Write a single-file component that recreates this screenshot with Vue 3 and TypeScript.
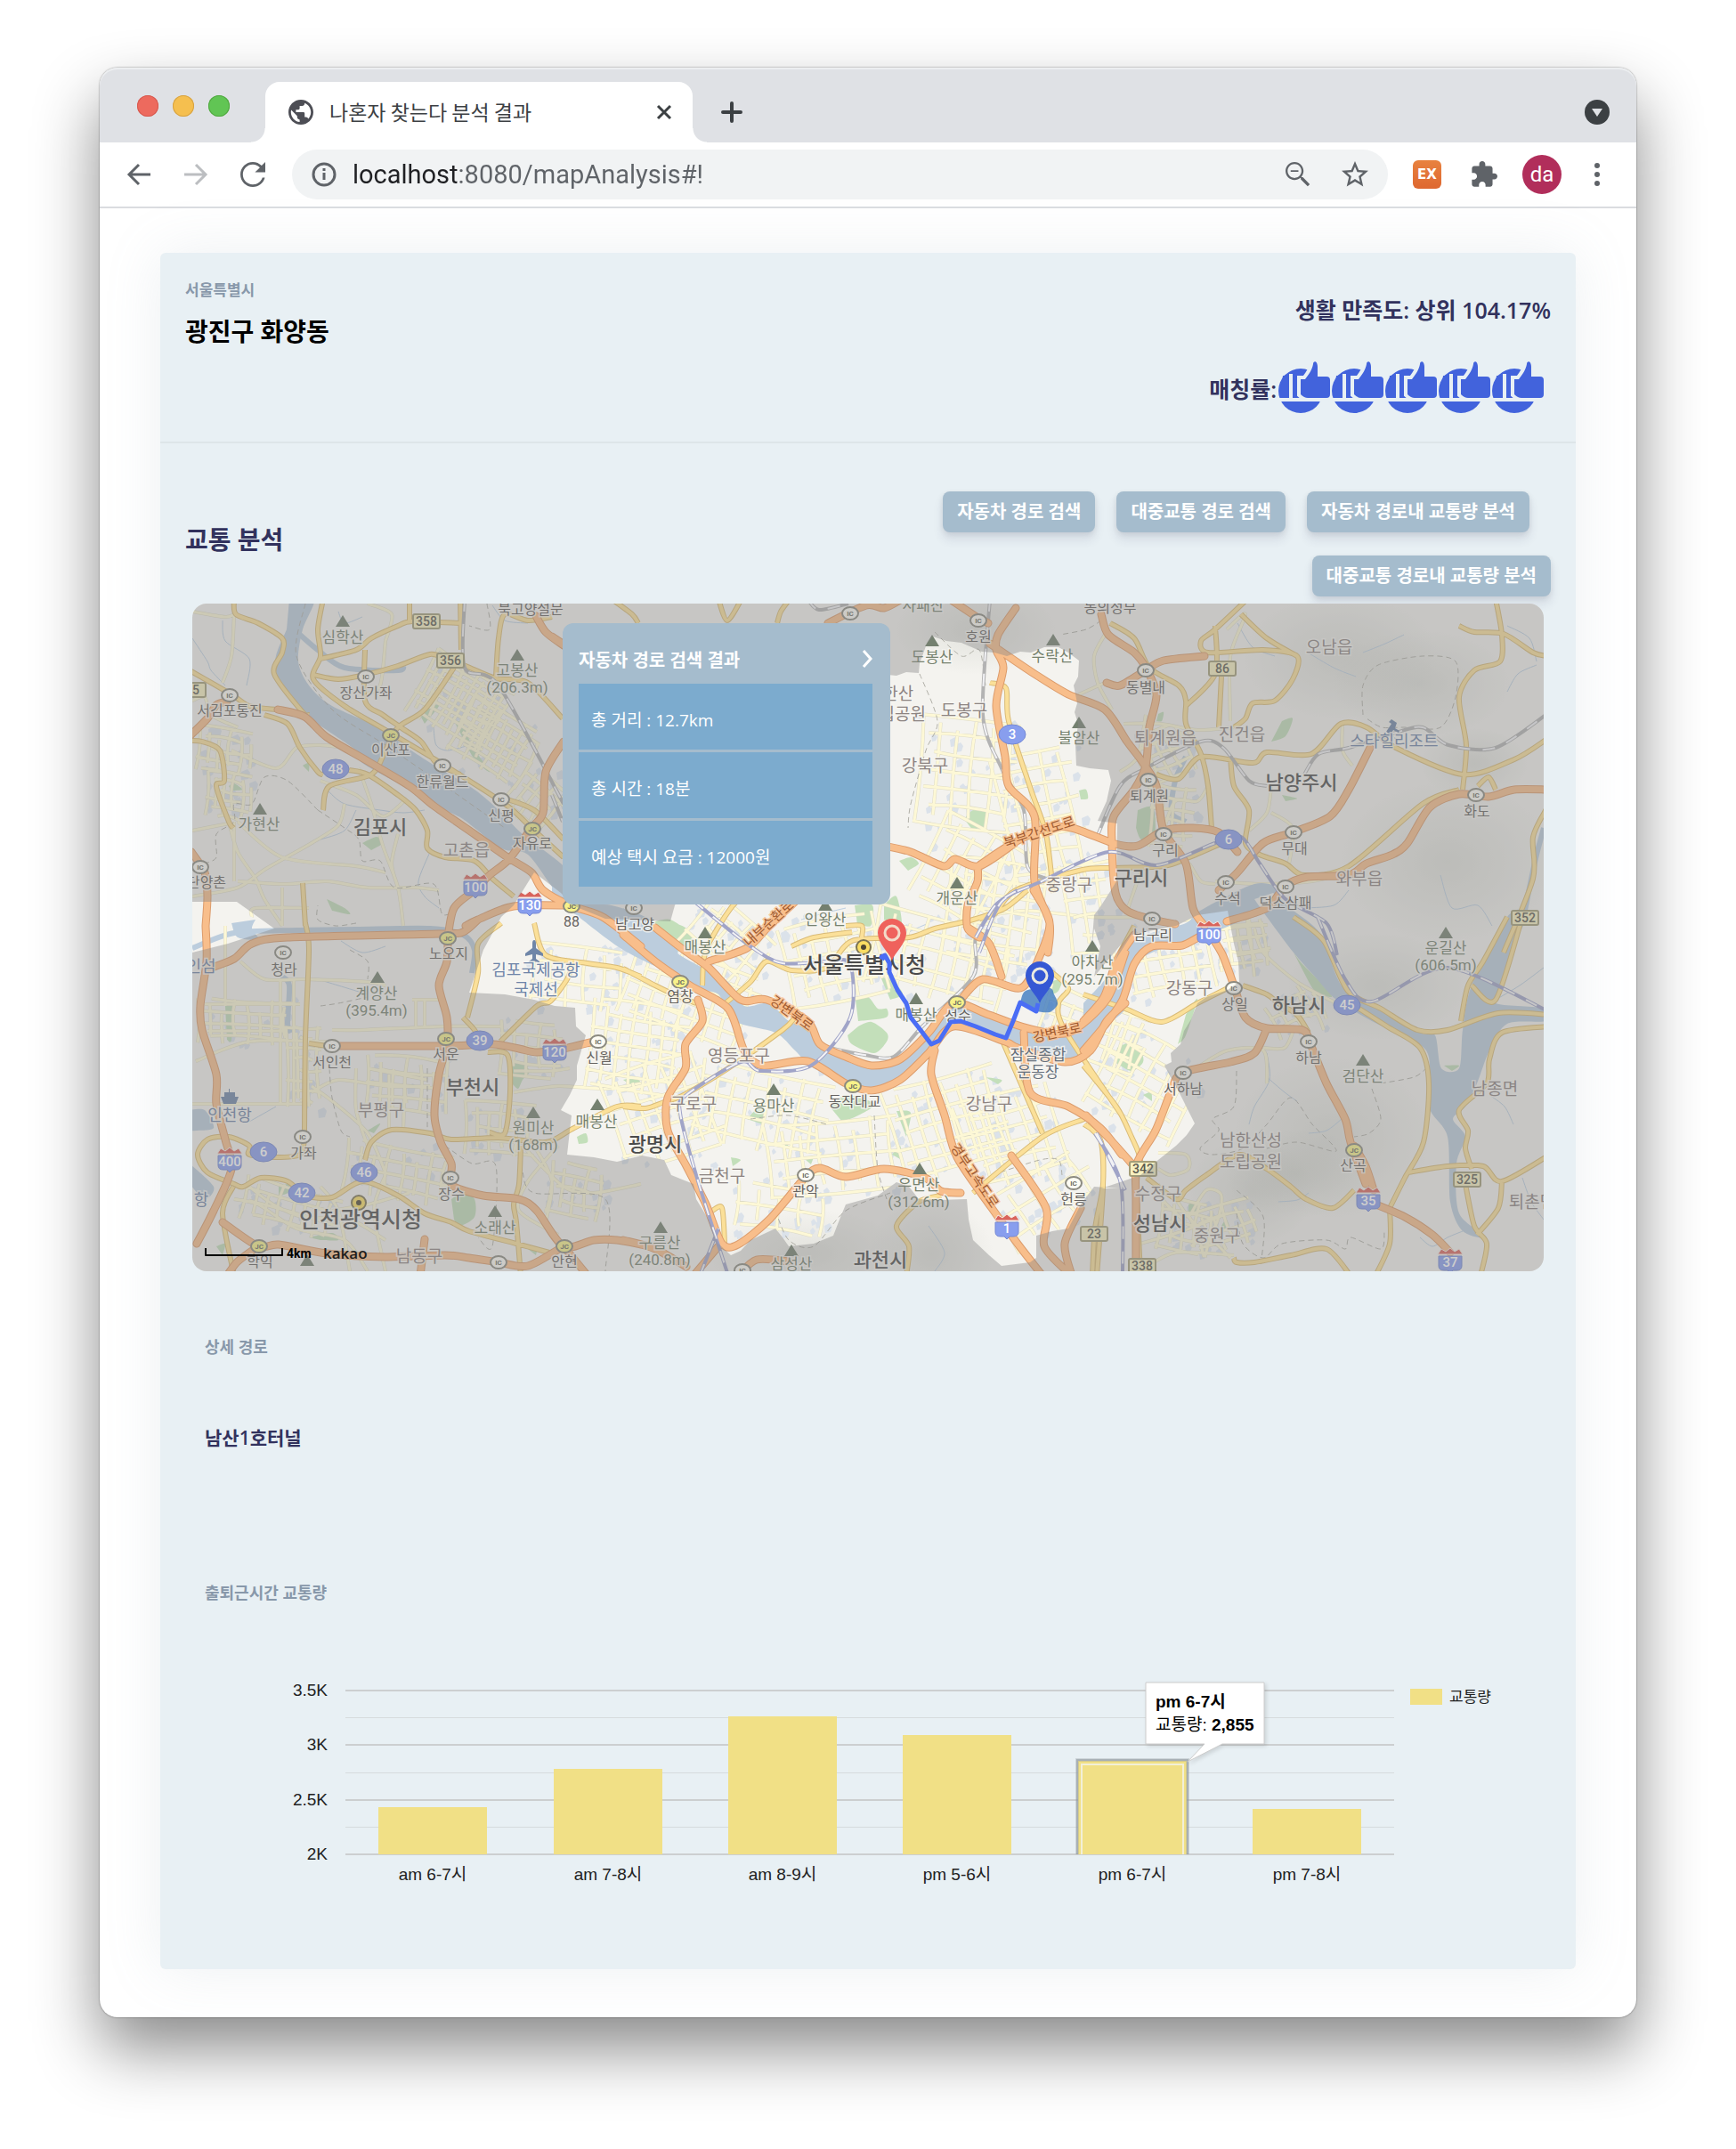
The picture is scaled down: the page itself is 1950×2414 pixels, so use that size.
<script setup lang="ts">
import { ref } from 'vue'

/* ---------- map tiles: every feature is stored in the units of its tile ---------- */
interface Tile { x: number; y: number; sx: number; sy: number }
type TileId = 'a' | 'b' | 'c' | 'd' | 'e' | 'f'
type Feature = [TileId, string]

const tiles: Record<TileId, Tile> = {
  a: { x: -16, y: -8, sx: 3, sy: 3 },
  b: { x: 404, y: -8, sx: 3, sy: 3 },
  c: { x: 884, y: -8, sx: 2.412, sy: 3 },
  d: { x: -16, y: 362, sx: 3, sy: 3 },
  e: { x: 484, y: 322, sx: 2.8, sy: 3 },
  f: { x: 1004, y: 352, sx: 2.958, sy: 3 },
}

function place(id: TileId, x: number, y: number): [number, number] {
  const t = tiles[id]
  return [Math.round(x / t.sx + t.x), Math.round(y / t.sy + t.y)]
}

function points([id, data]: Feature): [number, number][] {
  return data.split(' ').map((pair) => {
    const [x, y] = pair.split(',').map(Number)
    return place(id, x, y)
  })
}

function curve(pts: [number, number][]): string {
  let d = `M${pts[0][0]} ${pts[0][1]}`
  for (let i = 0; i < pts.length - 1; i++) {
    const p0 = pts[Math.max(i - 1, 0)]
    const p1 = pts[i]
    const p2 = pts[i + 1]
    const p3 = pts[Math.min(i + 2, pts.length - 1)]
    const c = [
      p1[0] + (p2[0] - p0[0]) / 7, p1[1] + (p2[1] - p0[1]) / 7,
      p2[0] - (p3[0] - p1[0]) / 7, p2[1] - (p3[1] - p1[1]) / 7,
    ].map((n) => n.toFixed(1))
    d += `C${c[0]} ${c[1]} ${c[2]} ${c[3]} ${p2[0]} ${p2[1]}`
  }
  return d
}

const lines = (list: Feature[]) => list.map((f) => curve(points(f))).join('')
const areas = (list: Feature[]) => list.map((f) => curve(points(f)) + 'Z').join('')

const water = areas([
  ['a', '375,10 460,10 420,110 405,220 440,300 520,370 700,450 760,500 880,580 1000,650 1080,720 1160,800 1290,900 1360,980 1290,1010 1180,870 1090,850 960,750 880,710 760,640 620,560 600,520 500,450 430,400 330,280 330,200 365,110'],
  ['b', '0,940 70,1030 200,1040 330,1090 420,1180 400,1260 240,1190 90,1080 0,1010'],
  ['e', '0,60 100,160 180,220 250,260 330,310 380,390 460,380 520,440 590,470 650,540 740,590 830,590 890,550 960,470 1010,400 1060,390 1150,420 1250,470 1400,490 1450,450 1520,370 1580,290 1580,400 1500,470 1430,560 1340,560 1240,530 1190,500 1060,450 1020,470 980,530 900,620 800,665 720,650 600,600 540,540 480,480 350,440 300,350 230,330 120,240 0,140'],
  ['f', '-10,290 80,190 110,110 200,60 330,20 380,-20 560,-110 640,-90 560,-10 400,60 220,120 150,170 110,290 60,370 -10,420'],
  ['f', '560,-60 600,0 690,120 760,200 830,280 950,350 1130,450 1140,640 1200,740 1210,960 1250,1060 1330,1080 1240,1000 1230,830 1260,740 1220,680 1260,640 1300,560 1340,450 1400,360 1530,350 1530,310 1360,290 1380,230 1450,0 1400,0 1280,230 1250,380 1240,510 1180,510 1160,400 1110,390 980,310 850,230 780,60 690,-20 620,-80'],
  ['d', '40,620 90,620 120,680 60,690 40,690'],
  ['d', '40,800 120,880 90,920 40,870'],
  ['d', '180,-10 200,40 270,45 250,10 260,-20'],
])
const streams = lines([
  ['c', '1529,780 1510,870 1490,980 1470,1100 1420,1200'],
  ['c', '560,540 530,620 520,730 560,760'],
  ['d', '48,75 190,25 400,15 600,12 850,10 960,30 1000,80 990,160'],
  ['d', '350,170 375,200 370,330 380,360'],
  ['a', '410,130 470,180 560,240 740,250 760,230'],
])
const brooks = lines([
  ['a', '48,140 100,220 110,250 160,300'], ['a', '150,80 160,150 240,210 230,300'],
  ['a', '500,650 560,700 680,720 760,730 830,720'], ['a', '600,720 560,790 480,820'],
  ['a', '860,440 870,500 910,520 980,500'], ['a', '850,860 810,960 830,1010 880,1050'],
  ['a', '1060,30 1100,80 1180,90'], ['a', '540,50 560,90 620,70'], ['c', '890,190 960,240 1020,270'],
  ['c', '1040,190 1100,160 1150,130'], ['c', '1430,320 1460,260 1510,230'], ['c', '1430,100 1490,140 1510,220'],
  ['c', '1250,940 1280,1050 1350,1040 1390,1110'], ['c', '870,1050 960,1040 1000,990'],
  ['c', '700,90 740,170 800,200'], ['f', '600,460 610,550 560,640 540,700'], ['f', '600,540 660,590 700,620'],
  ['f', '740,730 800,720 850,680'], ['f', '1340,600 1390,640 1420,700'], ['f', '1360,280 1440,230 1521,170'],
  ['d', '470,180 540,200 640,230'], ['d', '550,50 620,90 700,70'], ['d', '240,660 330,610'], ['e', '560,100 620,80 700,60'],
  ['f', '1110,1080 1150,1110 1200,1080 1250,1060'], ['f', '1450,880 1480,960 1521,1020'], ['f', '640,960 700,955 740,930'],
  ['e', '960,1130 1010,1220 980,1284'], ['e', '860,170 900,140 960,110'],
])

const parks = areas([
  ['a', '930,420 960,430 990,500 1050,590 1000,550 965,490'], ['a', '170,640 190,630 215,650 180,655'],
  ['a', '620,830 670,810 690,830 650,855'], ['a', '500,1020 560,1050 580,1070 520,1060'], ['a', '420,570 440,560 440,590'],
  ['a', '810,390 850,370 880,370 830,430'], ['c', '430,720 470,710 475,800 440,820 425,780'],
  ['c', '820,420 850,410 830,470 790,490'], ['c', '820,670 860,680 830,690'], ['c', '485,395 500,390 495,420 480,420'],
  ['c', '0,710 20,730 15,780 0,770'], ['c', '270,655 290,650 295,680 275,685'],
  ['b', '1390,750 1420,720 1465,720 1450,770 1420,790'], ['b', '1170,890 1210,880 1235,900 1200,925'],
  ['b', '1120,1040 1160,1010 1180,1120 1130,1100'], ['b', '1020,1040 1080,1040 1075,1110 1030,1100'], ['b', '330,1100 400,1090 470,1150 420,1200'],
  ['d', '160,270 185,270 180,385 165,385'], ['d', '1120,470 1150,460 1185,490 1160,520 1145,550 1125,530'],
  ['d', '920,920 960,900 1000,920 1000,980 950,1010 930,990'], ['d', '340,880 375,870 370,900 340,910'], ['d', '440,1050 520,1035 540,1060 480,1060'],
  ['d', '1345,710 1375,700 1380,730 1350,735'], ['d', '1500,520 1540,510 1560,530 1530,540'], ['d', '640,690 680,665 660,700'],
  ['d', '1180,1090 1210,1085 1205,1110'], ['d', '130,1080 160,1070 150,1110'],
  ['e', '730,370 770,360 800,400 830,400 825,430 740,440'], ['e', '740,460 780,445 830,480 830,510 790,550 720,520 705,490'],
  ['e', '390,770 440,720 440,790'], ['e', '650,730 700,690 790,720 740,760 690,780'], ['e', '860,745 905,750 890,830'],
  ['e', '845,890 870,860 875,910'], ['e', '1140,630 1190,640 1180,655'], ['e', '570,905 600,895 590,925'], ['e', '500,850 520,855 500,880'],
  ['e', '810,290 850,310 880,350 840,370'], ['e', '1340,310 1380,300 1370,340 1350,350'], ['e', '160,110 200,130 230,190 260,210 180,190'],
  ['e', '730,60 760,70 755,120 735,120'], ['e', '820,50 860,50 860,110 820,100'], ['e', '340,900 370,910 345,930'],
  ['f', '105,440 140,425 180,450 190,490 150,520 95,490'], ['f', '190,600 215,590 220,620'], ['f', '690,120 720,160 790,230 815,270 760,250 730,200'],
  ['f', '330,330 350,300 370,280 330,400 305,430'], ['f', '1190,500 1240,500 1215,520'], ['f', '340,970 365,960 365,1000 340,1000'], ['f', '440,1060 465,1020 480,1050'],
])

const motorways = lines([
  ['a', '335,382 425,405 500,475 640,555 780,640 860,705 1000,800 1110,880 1190,930 1230,990 1320,1040 1430,1080 1560,1180'],
  ['a', '40,470 100,410 130,365 165,355'], ['a', '44,860 90,930 100,1010 93,1110'],
  ['d', '93,0 97,120 75,270 80,350 130,500 130,600 160,720 180,820 120,960 62,1072'],
  ['d', '105,145 190,110 250,60 370,40 880,28 960,20 1010,-20'], ['a', '970,1110 1010,1090 1130,1045 1320,1040'],
  ['a', '910,1150 930,1050 1000,990 1050,940 1115,885 1190,780 1230,730 1240,590 1300,490'],
  ['d', '910,30 905,120 880,200 905,310 905,400 880,500 865,640 885,730 920,800 918,850 930,880 1030,910 1150,920 1210,960 1300,1080 1400,1060 1480,1060 1560,1075'],
  ['d', '545,405 900,405 1060,400 1150,415 1210,425 1300,415 1400,390'],
  ['d', '150,1000 270,1080 340,1075 500,1105 700,1115 900,1110 980,1120 1080,1135 1180,1145 1300,1080'],
  ['d', '165,1180 200,1130 270,1080'], ['d', '830,1055 815,1180'], ['d', '1300,1080 1380,1180'], ['a', '1205,65 1240,120 1300,165'],
  ['b', '0,135 36,160'], ['b', '930,90 1060,30 1120,40 1180,10'], ['b', '1340,10 1430,70 1470,90'],
  ['c', '100,40 50,130 45,180 65,240 45,370 70,540 80,640 150,740 150,960 190,1100 185,1200'],
  ['e', '1290,0 1340,110 1300,250 1250,330 1130,300 1060,370'],
  ['c', '30,160 150,260 240,330 340,380 400,490 445,560 480,640 500,790 560,900 580,1050 610,1110'],
  ['c', '330,60 350,130 420,190 450,240 480,330 460,440 450,570 420,650 365,740 360,830 370,1000 400,1060 470,1090 530,1103'],
  ['c', '345,290 380,300 450,250 500,215 610,200'], ['c', '0,905 80,840 180,780 250,780 370,835 430,840 500,790 580,780 650,795 700,860'],
  ['c', '1060,510 1000,650 950,740 850,795 770,830 700,930 650,990'],
  ['c', '1540,650 1450,650 1380,675 1300,665 1220,710 1160,830 1120,870 1050,900 1000,940 890,945 830,975 780,1050 670,1095'],
  ['b', '1120,840 1210,860 1320,910 1360,885 1440,910 1560,830'], ['b', '1435,910 1435,960 1400,1040 1400,1120 1440,1150'],
  ['e', '1090,130 1150,180 1190,290'],
  ['e', '100,125 190,200 270,260 370,370 450,370 580,440 620,520 700,560 780,590 870,570 960,480 1040,380 1150,420 1270,465 1400,480 1520,370 1580,210'],
  ['e', '0,150 100,240 210,320 330,400 380,540 440,590 580,575 700,650 780,675 870,640 960,550 1040,460 1200,510 1240,530 1390,580 1470,540 1520,440 1580,380'],
  ['f', '-10,350 60,270 100,150 160,60'],
  ['f', '-10,450 60,370 120,280 160,160 220,100 320,95 400,60 450,120 490,230 530,340 600,375 720,380 745,430 800,560 860,680 880,760 930,900'],
  ['f', '600,375 560,460 480,490 320,525 280,590 230,720 170,830 165,950 165,1210'], ['f', '0,670 80,750 150,830'],
  ['f', '890,770 930,840 955,920'], ['f', '940,960 1060,1010 1150,1070 1210,1130'],
  ['e', '235,370 250,440 195,520 195,600 140,700 140,810 200,930 260,1060 310,1190 360,1195 460,1110 570,970 620,935 700,965 820,940 950,970 1000,1015 1060,1020'],
  ['e', '980,540 970,620 1010,760 1050,900 1160,1070 1240,1190 1320,1300'], ['e', '1260,480 1280,680 1400,730 1500,800 1568,890'],
  ['e', '1220,895 1330,1070 1325,1200 1410,1300'], ['e', '1440,1070 1390,1190 1410,1300'], ['e', '0,1180 100,1210 200,1270'],
  ['e', '220,1300 300,1200'], ['e', '360,1300 420,1245 520,1250'], ['e', '270,240 390,195 460,120 540,40'],
])

const highways = lines([
  ['a', '40,250 180,330 240,370 330,380'], ['a', '40,485 80,490 140,520 155,620 130,640 170,760 185,780'],
  ['a', '190,10 195,60 270,90 350,140 350,190 325,260 420,390 440,400'],
  ['a', '490,10 470,110 480,200 455,280 560,370 700,450 900,570 1100,700 1190,780 1300,880'],
  ['a', '480,210 600,180 650,140 740,100 790,85 950,90'], ['a', '455,265 540,280 630,265 740,235 850,195 900,210 970,235 1070,275 1180,290 1296,410'],
  ['a', '630,180 630,350 690,400 750,440 820,490 870,560 950,600'], ['a', '780,10 780,80'], ['a', '950,10 955,180'], ['a', '1070,270 1080,140 1100,60 1180,80 1260,70'],
  ['a', '930,240 830,380 740,440 700,520 650,600 510,640 490,720'], ['a', '1100,680 1200,720 1300,820'],
  ['a', '575,585 640,600 740,670 800,720 840,790 840,850 900,880 1000,890 1060,950 1130,1010'],
  ['a', '290,400 370,430 410,510 470,590 490,600'], ['a', '420,965 430,1110'], ['d', '430,-10 440,80 430,380 425,700'],
  ['d', '440,395 500,405'], ['d', '975,310 1010,160 1010,60 1090,-10'], ['d', '960,310 1000,350 1020,390'], ['d', '1085,390 1210,270 1255,255 1310,180 1330,130'],
  ['d', '1200,-10 1240,100 1380,125 1480,140 1560,170'],
  ['d', '1045,425 1110,435 1120,560 1100,700 1050,695'], ['d', '630,790 650,730 720,688 850,700 920,720 1080,715 1240,730 1330,685 1480,610 1560,610'],
  ['d', '425,720 410,770 330,780 240,770 240,740 170,710 100,720 65,770 100,830 190,870 220,880 280,850 370,860 430,910 520,915 620,860 740,910 830,970 920,1000 980,1030 1140,1070 1250,1100'],
  ['d', '185,880 150,970 190,1180'], ['d', '1155,740 1150,870 1130,940 1140,1000 1155,1180'],
  ['e', '0,265 100,320 160,350 230,380'], ['e', '0,730 70,735 130,715 190,690 330,600 500,470 540,430'],
  ['e', '310,390 400,310 450,240 530,270 640,260 720,170 900,160 980,130 1100,100 1200,60 1270,0'], ['e', '700,120 750,120 750,160'], ['e', '250,320 260,200 340,60 400,0'],
  ['e', '530,190 600,160 720,140'], ['e', '1340,270 1400,330 1370,380 1390,470 1568,760'],
  ['c', '0,1085 40,1070 100,990 280,920 370,915 500,910 570,880 680,820'], ['c', '28,290 72,310 80,420 140,650 180,800 200,1000'],
  ['c', '355,90 420,140 460,240 540,300 560,350 560,430 600,530 620,640 630,780'],
  ['c', '725,10 640,110 600,150 620,190 770,180 860,200 850,280 800,350 740,360 720,410 690,440'], ['c', '640,100 640,260 560,370'], ['c', '710,60 780,140 860,200'], ['c', '655,270 650,440'],
  ['c', '480,600 540,615 600,540 740,560 780,525 900,530 980,430 1050,440 1130,510 1310,600 1450,550 1540,480'],
  ['c', '1310,650 1320,500 1300,340 1340,250 1410,220 1415,130 1400,10'], ['c', '1300,100 1340,120 1420,125 1500,190 1540,200'],
  ['c', '680,540 690,640 730,720 720,830 760,870 830,900 880,940 1000,910 1200,700 1300,650'], ['c', '1350,640 1380,610 1400,650'],
  ['c', '1540,710 1500,810 1500,950 1420,1200'], ['c', '380,1200 420,1110'],
  ['f', '520,230 600,260 640,290 700,330 740,390'], ['f', '690,0 790,80 870,250 980,310 1100,380 1200,380 1370,325 1540,330'],
  ['f', '860,280 1000,370 1110,440 1140,560 1120,760 1060,880 1010,980'], ['f', '1400,0 1320,150 1270,230 1245,350'], ['f', '1280,230 1360,280 1450,0'],
  ['f', '1540,370 1380,390 1340,480 1330,560 1240,650 1270,720 1260,780 1280,850'], ['f', '1070,860 1200,840 1320,840 1380,890 1540,800'],
  ['f', '1260,900 1290,1040 1330,1100 1310,1210'], ['f', '1380,890 1370,980 1300,1070'], ['f', '490,1150 500,1165 560,1165 680,1140 800,1120 880,1210'],
  ['f', '1010,980 1010,1100 960,1210'], ['f', '200,880 300,950 330,920 400,870 510,800 600,850 680,910 730,950 820,980 890,920'],
  ['f', '-10,500 100,640 150,740 180,820 170,900 180,1210'], ['f', '-10,260 130,310 250,355 370,290 470,240'], ['f', '0,700 50,760 55,900 30,1050 20,1210'],
  ['e', '1190,500 1320,820'], ['e', '1100,1020 1320,830 1450,770'], ['e', '1450,790 1500,840 1510,1000 1490,1300'],
  ['e', '1000,1030 930,1050 860,1130 900,1200 890,1300'], ['e', '280,1080 310,1070 320,1190'], ['b', '200,10 270,60 290,90'], ['b', '560,10 590,80 640,10'], ['b', '760,90 770,50 800,10'],
])

const localRoads = lines([
  ['a', '48,50 160,70 190,60'], ['a', '190,60 180,200 150,290'], ['a', '640,24 720,60 700,150'], ['a', '700,150 680,300 630,330'], ['a', '48,350 90,340 110,400 200,440'],
  ['a', '180,520 330,580 400,510 480,500 560,510'], ['a', '170,760 200,860 260,950 290,1020 350,1110'], ['a', '190,760 190,960'], ['a', '200,760 350,880 600,910 700,930'],
  ['a', '48,790 170,765'], ['a', '560,700 540,770 450,830 380,870 290,920 200,980 48,1010'], ['a', '610,580 650,700 690,840 740,980 760,1110'], ['a', '200,960 360,970 500,960 640,980 800,980 880,990'],
  ['a', '250,1080 260,1050 440,1050'], ['a', '350,980 350,1110'], ['a', '740,800 720,900 740,980'], ['a', '480,620 600,670 690,740 770,680'],
  ['d', '160,0 160,270'], ['d', '210,120 290,180 420,180 640,190 700,200'], ['d', '345,180 345,600'], ['d', '390,180 390,600'], ['d', '48,600 430,600'], ['d', '90,265 410,265'],
  ['d', '100,355 370,355'], ['d', '60,455 240,390 500,390'], ['d', '450,560 540,520 700,540 850,540'], ['d', '450,540 530,600 640,700 700,830'], ['d', '600,480 600,620 640,740'],
  ['d', '520,350 620,350 900,340 1090,340'], ['d', '710,500 710,680'], ['d', '765,500 760,690'], ['d', '640,480 840,520'], ['d', '800,250 800,340'], ['d', '830,250 830,340'], ['d', '790,250 880,250'],
  ['d', '1130,560 1280,540 1440,550 1560,530'], ['d', '1130,490 1250,490 1320,480'], ['d', '1160,740 1300,880 1400,900 1560,870'], ['d', '1280,740 1180,860 1150,960 1280,1040'], ['d', '1200,740 1260,860 1240,1000'],
  ['d', '240,880 320,940 420,980 580,990 700,1060'], ['d', '190,920 270,940 400,1020 560,1060 640,1163'], ['d', '480,880 540,960 580,1163'], ['d', '700,840 660,960 700,1163'], ['d', '780,900 640,940 520,960'],
  ['c', '340,130 310,200 320,290 360,380'], ['c', '270,330 340,290'], ['c', '390,430 490,430 590,450 690,440'], ['c', '450,400 430,540 380,590'], ['c', '500,790 530,690 590,690 620,640'],
  ['c', '790,640 780,730 730,790'], ['c', '790,730 850,780 840,900'], ['c', '640,960 770,970 900,960 1000,930'], ['c', '570,900 600,960 640,970'], ['c', '440,920 400,1060'], ['c', '0,1080 130,1060 300,1080 440,1080'],
  ['c', '985,430 985,520 1010,570'], ['c', '670,110 720,60 680,200 680,420'], ['f', '560,40 590,120 700,220 830,290'], ['f', '460,30 590,20'], ['f', '480,80 600,60'], ['f', '500,130 610,110'], ['f', '540,10 560,200'],
  ['f', '590,440 660,440 690,380'], ['f', '380,500 470,450 590,450 600,560'], ['f', '700,230 770,330 790,380'], ['f', '300,950 340,1010 420,1090 480,1150'], ['f', '350,1000 400,920 450,940 430,1040 350,1110'],
  ['f', '240,900 260,960 330,1030'], ['f', '180,1100 320,1060 470,1000'], ['f', '200,1180 300,1130 490,1140'], ['f', '240,795 330,800 340,850 280,870 240,850'],
])

/* dense street grids: x, y, width, height, angle, step */
type Grid = [number, number, number, number, number, number]
const cityGrids: Grid[] = [
  [560, 440, 150, 90, 20, 17], [500, 500, 110, 100, 8, 16], [530, 570, 120, 110, -18, 18], [640, 570, 150, 90, 12, 19], [720, 620, 150, 80, -6, 20],
  [850, 585, 130, 110, -16, 17], [920, 600, 110, 100, -16, 18], [840, 400, 160, 90, 14, 19], [720, 400, 110, 90, -12, 18], [900, 350, 110, 120, 8, 18],
  [955, 240, 90, 150, -12, 19], [870, 190, 110, 120, 6, 20], [870, 300, 100, 100, 28, 20], [1090, 400, 110, 80, -10, 18], [1070, 540, 110, 100, 28, 18],
  [1010, 480, 120, 70, 20, 16], [430, 420, 100, 70, 6, 20], [600, 380, 90, 70, 40, 18], [1010, 340, 60, 100, -8, 20], [660, 680, 100, 50, 8, 24], [960, 670, 120, 70, -32, 26],
]
const outerGrids: Grid[] = [
  [300, 110, 100, 80, 30, 9], [340, 155, 90, 70, 30, 11], [385, 220, 60, 60, 40, 13], [35, 165, 60, 50, 8, 12], [40, 215, 50, 50, 6, 10], [60, 470, 110, 50, 2, 14],
  [125, 520, 40, 90, 0, 12], [240, 540, 90, 60, 4, 15], [345, 590, 80, 60, 3, 14], [380, 500, 70, 60, 4, 15], [230, 640, 120, 60, 10, 16], [110, 680, 110, 50, 15, 14],
  [1180, 380, 60, 60, -8, 13], [1100, 240, 50, 70, 5, 13], [1090, 170, 60, 60, -24, 14], [1160, 700, 70, 50, -18, 13], [1240, 460, 60, 40, -25, 14], [1115, 700, 60, 60, 10, 14], [430, 660, 60, 60, 10, 14],
]
function gridPath(list: Grid[]): string {
  let d = ''
  for (const [cx, cy, w, h, angle, step] of list) {
    const c = Math.cos((angle * Math.PI) / 180)
    const s = Math.sin((angle * Math.PI) / 180)
    const at = (x: number, y: number) => `${(cx + x * c - y * s).toFixed(1)} ${(cy + x * s + y * c).toFixed(1)}`
    let k = 0
    for (let x = -w / 2; x <= w / 2; x += step, k++) d += `M${at(x, -h / 2 + (k % 3) * 7)}Q${at(x + 5 - (k % 4) * 3, 0)} ${at(x + 2, h / 2 - (k % 2) * 9)}`
    for (let y = -h / 2; y <= h / 2; y += step, k++) d += `M${at(-w / 2 + (k % 3) * 8, y)}Q${at(0, y + 5 - (k % 4) * 3)} ${at(w / 2 - (k % 2) * 10, y + 2)}`
  }
  return d
}
const cityStreets = gridPath(cityGrids)
const outerStreets = gridPath(outerGrids)

/* built-up blocks scattered over the districts */
let seed = 17
const rnd = () => { seed = (seed * 16807) % 2147483647; return seed / 2147483647 }
const blocks = [...cityGrids, ...outerGrids, ...cityGrids].map(([cx, cy, w, h]) => {
  let d = ''
  for (let i = 0; i < 11; i++) {
    const x = (cx + (rnd() - 0.5) * w * 1.1).toFixed(0)
    const y = (cy + (rnd() - 0.5) * h * 1.1).toFixed(0)
    const a = (2 + rnd() * 5).toFixed(0)
    d += `M${x} ${y}l${a} -3l3 4l-2 ${a}l-${a} 1z`
  }
  return d
}).join('')

const railways = lines([
  ['a', '965,10 965,240 1080,300 1300,700'], ['c', '30,10 10,400 60,580 120,720 130,910 180,950'], ['c', '315,820 380,640 450,580 600,490 660,510 730,620 780,640'],
  ['c', '880,600 920,530 1000,510 1130,460 1200,440 1270,500 1400,510 1540,395'], ['e', '650,530 760,555 850,560 940,460 1100,290 1110,160 1170,50'], ['b', '0,670 36,760'], ['b', '860,10 900,45 1000,24'],
])
const metro = lines([
  ['c', '0,1200 60,1030 170,960 350,860 480,905 640,830 710,810 760,900 830,1020 940,1100 970,1210'], ['e', '1110,160 1170,50 1240,0'],
  ['e', '220,35 400,190 500,245 640,240 715,250 715,430 590,590 430,610 370,580 200,690 180,750 230,960 330,1300'], ['f', '770,0 860,210 950,285 1200,170 1540,320'], ['f', '30,730 115,900 120,1210'],
  ['e', '240,1300 300,1140'], ['e', '1490,820 1580,1010'],
])
const borders = lines([
  ['a', '470,720 370,620 290,610 250,700 190,700 190,760 130,800 130,880 90,900'], ['a', '470,720 560,780 610,820 620,890 680,890 730,980 860,970 890,1070 950,1050'], ['a', '600,1100 530,1110 470,1090 470,1040'],
  ['a', '430,24 400,200 520,380 700,500 900,640 1100,780'], ['a', '1040,24 1050,110 980,100'], ['c', '1040,400 1040,300 1080,230 1200,200 1290,220 1290,340 1250,440 1150,440 1090,440 1050,410'],
  ['c', '330,80 290,110 220,130'], ['f', '500,520 490,640 420,680 440,720 380,780 420,800 520,780 600,700 680,610 750,700 830,790 700,760 600,780'], ['f', '980,560 1090,540 1130,510'], ['f', '950,580 980,680 940,730 890,740'],
  ['f', '500,920 590,1010 580,1180'], ['f', '500,1000 520,1100 590,1150 650,1100 800,1090 860,1120 880,1080 980,1120 990,1060'], ['e', '790,760 800,940 830,1040'], ['e', '480,1080 520,1180 600,1200 700,1080 840,1020'],
  ['e', '1160,960 1310,910 1370,910 1380,960'], ['e', '400,770 520,760 640,790'], ['d', '510,480 520,580 550,690 580,710'], ['d', '900,740 990,800 1070,810 1060,1080 1010,1050'], ['d', '840,480 840,690'],
  ['d', '1160,830 1200,900 1440,920 1440,1163'], ['d', '480,270 540,260 640,240'], ['d', '580,80 640,120 640,180'], ['b', '1240,260 1300,420 1260,520 1210,700 1200,780'], ['b', '1290,120 1380,200 1440,180 1460,300'],
])

/* Seoul stays bright, everything outside is dimmed */
const seoulParts: Feature[] = [
  ['a', '1030,1190 1090,1080 1130,1040 1200,930 1290,1000'],
  ['b', '70,1040 180,1085 400,1095 415,1040 600,700 900,420 1130,265 1160,268 1195,255 1235,258 1240,225 1248,200 1262,160 1285,135 1330,150 1380,155 1450,185'],
  ['c', '40,190 75,200 110,185 140,190 175,172 215,170 240,190 270,215 268,270 256,300 265,360 258,390 268,430 260,500 262,570 300,580 350,585 358,620 345,690 322,755 375,765 372,960 352,1000 330,1040 310,1075 305,1190'],
  ['e', '1480,130 1500,190 1480,290 1568,180'],
  ['f', '95,150 150,60 300,30 370,-5 470,-20 490,90 505,150 508,220 470,245 400,270 370,290 350,345 325,385 315,430 280,460 285,490 260,500 280,540 300,570 360,695 335,735 300,770 240,820 180,870 120,890 50,915'],
  ['e', '1560,1005 1480,1000 1440,1060 1400,1140 1350,1150 1300,1165 1300,1240 1280,1255 1190,1265 1150,1230 1100,1180 1085,1110 1080,1040 990,1045 930,1040 900,1000 860,985 800,1030 700,1060 680,1110 660,1165 600,1190 520,1200 500,1170 480,1140 400,1180 370,1215 340,1230 300,1190 270,1110 230,1040 220,990 150,960 130,910 60,895'],
  ['d', '1480,795 1400,780 1310,770 1320,690 1325,640 1290,620 1320,570 1345,520 1345,470 1375,370 1340,340 1338,275 1270,270 1200,248 1100,230 980,225'],
]
const seoul = 'M' + seoulParts.flatMap(points).map((p) => p.join(' ')).join('L') + 'Z'
const shade = `M0 0H1518V750H0Z${seoul}M0 335L50 335L92 365L40 382L0 392Z`
const hwayang = areas([['e', '1248,380 1265,338 1340,330 1355,352 1365,385 1340,410 1300,408']])
const route = 'M' + points(['e', '822,232 812,225 822,218 838,245 836,275 862,335 890,380 905,430 935,470 970,520 995,508 1030,445 1060,440 1110,460 1170,485 1205,497 1225,440 1248,378 1300,408 1306,380']).map((p) => p.join(' ')).join('L')

/* ---------- map labels and signs ---------- */
type LabelKind = 'city' | 'capital' | 'district' | 'peak' | 'exit' | 'poi' | 'road'
type Label = [TileId, number, number, string, LabelKind, number?]
const labels: Label[] = [
  ['a', 555, 145, '심학산', 'peak'], ['a', 632, 330, '장산가좌', 'exit'], ['a', 175, 390, '서김포통진', 'exit'], ['a', 717, 523, '이산포', 'exit'],
  ['a', 892, 630, '한류월드', 'exit'], ['a', 1188, 47, '북고양설문', 'exit'], ['a', 1142, 255, '고봉산', 'peak'], ['a', 1142, 313, '(206.3m)', 'peak'],
  ['a', 272, 775, '가현산', 'peak'], ['a', 682, 782, '김포시', 'city'], ['a', 1090, 744, '신평', 'exit'], ['a', 1194, 837, '자유로', 'exit'],
  ['a', 972, 860, '고촌읍', 'district'], ['a', 95, 970, '단양촌', 'exit'], ['a', 1326, 1100, '88', 'exit'],
  ['b', 1250, 35, '사패산', 'peak'], ['b', 1438, 140, '호원', 'exit'], ['b', 1280, 210, '도봉산', 'peak'], ['b', 1140, 332, '북한산', 'district'], ['b', 1155, 403, '국립공원', 'district'],
  ['b', 1388, 390, '도봉구', 'district'], ['b', 1256, 577, '강북구', 'district'], ['b', 1366, 1023, '개운산', 'peak'], ['b', 922, 1095, '인왕산', 'peak'], ['b', 278, 1110, '남고양', 'exit'], ['b', 515, 1187, '매봉산', 'peak'],
  ['c', 355, 42, '동의정부', 'exit'], ['c', 198, 207, '수락산', 'peak'], ['c', 270, 483, '불암산', 'peak'], ['c', 452, 312, '동별내', 'exit'], ['c', 503, 483, '퇴계원읍', 'district'],
  ['c', 712, 470, '진건읍', 'district'], ['c', 948, 178, '오남읍', 'district'], ['c', 1125, 492, '스타힐리조트', 'poi'], ['c', 874, 632, '남양주시', 'city'], ['c', 460, 677, '퇴계원', 'exit'],
  ['c', 1348, 730, '화도', 'exit'], ['c', 503, 860, '구리', 'exit'], ['c', 440, 953, '구리시', 'city'], ['c', 853, 855, '무대', 'exit'], ['c', 243, 977, '중랑구', 'district'],
  ['c', 672, 1022, '수석', 'exit'], ['c', 829, 1038, '덕소삼패', 'exit'], ['c', 1029, 957, '와부읍', 'district'], ['c', 470, 1145, '남구리', 'exit'], ['c', 165, 800, '북부간선도로', 'road', -18],
  ['d', 77, 142, '인섬', 'poi'], ['d', 357, 152, '청라', 'exit'], ['d', 670, 233, '계양산', 'peak'], ['d', 670, 290, '(395.4m)', 'peak'], ['d', 912, 98, '노오지', 'exit'],
  ['d', 1205, 152, '김포국제공항', 'poi'], ['d', 1207, 218, '국제선', 'poi'], ['d', 520, 466, '서인천', 'exit'], ['d', 902, 437, '서운', 'exit'], ['d', 993, 550, '부천시', 'city'],
  ['d', 1420, 450, '신월', 'exit'], ['d', 685, 627, '부평구', 'district'], ['d', 175, 642, '인천항', 'poi'], ['d', 1197, 688, '원미산', 'peak'], ['d', 1197, 745, '(168m)', 'peak'],
  ['d', 1411, 665, '매봉산', 'peak'], ['d', 422, 770, '가좌', 'exit'], ['d', 77, 926, '항', 'poi'], ['d', 614, 997, '인천광역시청', 'capital'], ['d', 920, 910, '장수', 'exit'],
  ['d', 1069, 1022, '소래산', 'peak'], ['d', 812, 1120, '남동구', 'district'], ['d', 276, 1138, '학익', 'exit'], ['d', 1301, 1138, '안현', 'exit'],
  ['e', 180, 363, '염창', 'exit'], ['e', 760, 257, '서울특별시청', 'capital'], ['e', 922, 425, '매봉산', 'peak'], ['e', 1052, 430, '성수', 'exit'], ['e', 1475, 248, '아차산', 'peak'],
  ['e', 1475, 305, '(295.7m)', 'peak'], ['e', 365, 563, '영등포구', 'district'], ['e', 220, 727, '구로구', 'district'], ['e', 474, 732, '용마산', 'peak'], ['e', 727, 718, '동작대교', 'exit'],
  ['e', 1150, 725, '강남구', 'district'], ['e', 1305, 560, '잠실종합', 'stadium' as LabelKind], ['e', 1305, 618, '운동장', 'stadium' as LabelKind], ['e', 100, 862, '광명시', 'city'], ['e', 312, 968, '금천구', 'district'],
  ['e', 575, 1020, '관악', 'exit'], ['e', 930, 998, '우면산', 'peak'], ['e', 930, 1057, '(312.6m)', 'peak'], ['e', 1416, 1047, '헌릉', 'exit'], ['e', 115, 1195, '구름산', 'peak'],
  ['e', 115, 1252, '(240.8m)', 'peak'], ['e', 528, 1267, '삼성산', 'peak'], ['e', 808, 1250, '과천시', 'city'], ['e', 462, 118, '내부순환로', 'road', -42], ['e', 525, 420, '강변북로', 'road', 36],
  ['e', 1365, 485, '강변북로', 'road', -12], ['e', 1100, 965, '경부고속도로', 'road', 56],
  ['f', 342, 245, '강동구', 'district'], ['f', 495, 300, '상일', 'exit'], ['f', 706, 302, '하남시', 'city'], ['f', 1195, 112, '운길산', 'peak'], ['f', 1195, 168, '(606.5m)', 'peak'],
  ['f', 740, 480, '하남', 'exit'], ['f', 920, 542, '검단산', 'peak'], ['f', 322, 585, '서하남', 'exit'], ['f', 1357, 585, '남종면', 'district'], ['f', 548, 760, '남한산성', 'district'],
  ['f', 548, 832, '도립공원', 'district'], ['f', 888, 843, '산곡', 'exit'], ['f', 240, 940, '수정구', 'district'], ['f', 246, 1037, '성남시', 'city'], ['f', 435, 1080, '중원구', 'district'], ['f', 1482, 965, '퇴촌면', 'district'],
]

type SignKind = 'ic' | 'jc' | 'route' | 'shield' | 'local' | 'peak' | 'hall'
type Sign = [TileId, number, number, SignKind, string?]
const signs: Sign[] = [
  ['a', 555, 85, 'peak'], ['a', 1142, 199, 'peak'], ['a', 275, 718, 'peak'], ['b', 1281, 150, 'peak'], ['b', 1366, 965, 'peak'], ['b', 922, 1040, 'peak'], ['b', 515, 1134, 'peak'],
  ['c', 199, 148, 'peak'], ['c', 270, 427, 'peak'], ['c', 307, 1180, 'peak'], ['c', 1265, 1135, 'peak'], ['d', 671, 175, 'peak'], ['d', 1197, 629, 'peak'], ['d', 1413, 604, 'peak'],
  ['d', 1069, 964, 'peak'], ['d', 435, 1127, 'peak'], ['e', 922, 367, 'peak'], ['e', 474, 673, 'peak'], ['e', 931, 940, 'peak'], ['e', 117, 1136, 'peak'], ['e', 528, 1214, 'peak'], ['f', 921, 484, 'peak'],
  ['a', 174, 332, 'ic'], ['a', 632, 271, 'ic'], ['a', 892, 571, 'ic'], ['a', 1088, 685, 'ic'], ['a', 74, 913, 'ic'], ['a', 717, 469, 'jc'], ['a', 1194, 782, 'jc'], ['a', 1326, 1045, 'jc'],
  ['a', 910, 1151, 'jc'], ['b', 1004, 58, 'ic'], ['b', 1436, 80, 'ic'], ['b', 276, 1050, 'ic'], ['c', 450, 250, 'ic'], ['c', 459, 619, 'ic'], ['c', 500, 800, 'ic'], ['c', 851, 794, 'ic'],
  ['c', 669, 962, 'ic'], ['c', 830, 977, 'ic'], ['c', 468, 1085, 'ic'], ['c', 1346, 670, 'ic'], ['d', 355, 90, 'ic'], ['d', 519, 405, 'ic'], ['d', 902, 380, 'jc'], ['d', 1416, 391, 'ic'],
  ['d', 420, 710, 'ic'], ['d', 917, 849, 'ic'], ['d', 273, 1080, 'jc'], ['d', 1301, 1080, 'jc'], ['d', 1081, 1133, 'ic'], ['e', 179, 308, 'jc'], ['e', 1050, 378, 'jc'], ['e', 723, 661, 'jc'],
  ['e', 573, 961, 'ic'], ['e', 1417, 987, 'ic'], ['e', 376, 1280, 'ic'], ['f', 491, 240, 'ic'], ['f', 740, 420, 'ic'], ['f', 321, 525, 'ic'], ['f', 889, 786, 'jc'],
  ['a', 531, 581, 'route', '48'], ['c', 90, 465, 'route', '3'], ['c', 676, 820, 'route', '6'], ['d', 1016, 387, 'route', '39'], ['d', 289, 763, 'route', '6'], ['d', 627, 831, 'route', '46'],
  ['d', 418, 901, 'route', '42'], ['f', 868, 296, 'route', '45'], ['a', 1003, 974, 'shield', '100'], ['a', 1184, 1036, 'shield', '130'], ['c', 622, 1134, 'shield', '100'], ['d', 1268, 420, 'shield', '120'],
  ['d', 174, 790, 'shield', '400'], ['e', 1206, 1133, 'shield', '1'], ['f', 937, 952, 'shield', '35'], ['f', 1209, 1158, 'shield', '37'],
  ['a', 836, 84, 'local', '358'], ['a', 917, 215, 'local', '356'], ['a', 48, 315, 'local', '55'], ['c', 658, 243, 'local', '86'], ['c', 1478, 1084, 'local', '352'], ['e', 1480, 1158, 'local', '23'],
  ['f', 188, 848, 'local', '342'], ['f', 186, 1176, 'local', '338'], ['f', 1267, 886, 'local', '325'], ['d', 608, 932, 'hall'], ['e', 755, 191, 'hall'],
]
const placedLabels = labels.map(([id, x, y, text, kind, turn]) => {
  const [px, py] = place(id, x, y)
  return { px, py: py - 2, text, kind, transform: turn ? `rotate(${turn} ${px} ${py})` : undefined }
})
const placedSigns = signs.map(([id, x, y, kind, text]) => {
  const [px, py] = place(id, x, y)
  return { transform: `translate(${px} ${py})`, kind, text }
})
const hills = [[1290, 60, 110, 70], [1380, 90, 100, 60], [1410, 290, 120, 90], [1280, 600, 110, 90], [1240, 640, 80, 50], [1330, 430, 100, 60], [880, 30, 90, 50], [690, 730, 110, 50], [1440, 180, 60, 40], [830, 730, 70, 60], [1190, 660, 70, 60]]

/* ---------- page data ---------- */
const actions = ['자동차 경로 검색', '대중교통 경로 검색', '자동차 경로내 교통량 분석', '대중교통 경로내 교통량 분석']
const summary = ['총 거리 : 12.7km', '총 시간 : 18분', '예상 택시 요금 : 12000원']
const open = ref(true)
const address = ref('localhost:8080/mapAnalysis#!')

const plot = { left: 208, right: 1386, bottom: 280, unit: 61.5 }
const traffic = [
  { label: 'am 6-7시', value: 2430 }, { label: 'am 7-8시', value: 2780 }, { label: 'am 8-9시', value: 3258 },
  { label: 'pm 5-6시', value: 3088 }, { label: 'pm 6-7시', value: 2855 }, { label: 'pm 7-8시', value: 2415 },
]
const slot = (plot.right - plot.left) / traffic.length
const bars = traffic.map((t, i) => {
  const height = Math.round(((t.value - 2000) / 500) * plot.unit)
  const center = Math.round(plot.left + slot * (i + 0.5))
  return { ...t, center, x: center - 61, y: plot.bottom - height, height }
})
const ticks = ['2K', '2.5K', '3K', '3.5K'].map((label, i) => ({ label, y: Math.round(plot.bottom - 1 - i * plot.unit) }))
const minor = [0, 1, 2].map((i) => Math.round(plot.bottom - 31 - i * plot.unit))
</script>

<template>
  <div class="desktop">
    <div class="window">
      <header class="tabs">
        <div class="lights">
          <button class="light red" aria-label="닫기"></button>
          <button class="light amber" aria-label="최소화"></button>
          <button class="light green" aria-label="확대"></button>
        </div>
        <div class="tab">
          <svg class="globe" viewBox="2 2 20 20" aria-hidden="true"><path d="M12 2C6.48 2 2 6.48 2 12s4.48 10 10 10 10-4.48 10-10S17.52 2 12 2zm-1 17.93c-3.95-.49-7-3.85-7-7.93 0-.62.08-1.21.21-1.79L9 15v1c0 1.1.9 2 2 2v1.93zm6.9-2.54c-.26-.81-1-1.39-1.9-1.39h-1v-3c0-.55-.45-1-1-1H8v-2h2c.55 0 1-.45 1-1V7h2c1.1 0 2-.9 2-2v-.41c2.93 1.19 5 4.06 5 7.41 0 2.08-.8 3.97-2.1 5.39z" /></svg>
          <span class="tab-title">나혼자 찾는다 분석 결과</span>
          <button class="icon" aria-label="탭 닫기"><svg width="20" height="20" viewBox="0 0 20 20"><path d="M3 3l14 14M17 3L3 17" fill="none" stroke="#3c4043" stroke-width="3" /></svg></button>
        </div>
        <button class="icon new-tab" aria-label="새 탭"><svg width="24" height="24" viewBox="0 0 24 24"><path d="M12 2v20M2 12h20" stroke="#3c4043" stroke-width="4" stroke-linecap="round" /></svg></button>
        <button class="icon tab-menu" aria-label="탭 검색"><svg width="28" height="28" viewBox="0 0 28 28"><circle cx="14" cy="14" r="14" fill="#3c4043" /><path d="M8 10h12l-6 9z" fill="#dfe1e5" /></svg></button>
      </header>

      <div class="toolbar">
        <button class="icon" aria-label="뒤로"><svg width="28" height="28" viewBox="0 0 28 28"><path d="M27 14H3M14 3L3 14l11 11" fill="none" stroke="#5f6368" stroke-width="3" /></svg></button>
        <button class="icon" aria-label="앞으로"><svg width="28" height="28" viewBox="0 0 28 28"><path d="M1 14h24M14 3l11 11-11 11" fill="none" stroke="#bcbec1" stroke-width="3" /></svg></button>
        <button class="icon" aria-label="새로고침"><svg width="28" height="28" viewBox="4 4 16 16"><path fill="#5f6368" d="M17.65 6.35C16.2 4.9 14.21 4 12 4c-4.42 0-7.99 3.58-7.99 8s3.57 8 7.99 8c3.73 0 6.84-2.55 7.73-6h-1.6c-.82 2.6-3.2 4.4-6.13 4.4-3.6 0-6.4-2.8-6.4-6.4s2.8-6.4 6.4-6.4c1.8 0 3.3.7 4.5 1.9L13.4 10.6H20V4z" /></svg></button>
        <div class="address">
          <svg width="28" height="28" viewBox="0 0 28 28" aria-hidden="true"><circle cx="14" cy="14" r="12" fill="none" stroke="#5f6368" stroke-width="3" /><path d="M14 12v8M14 7v3" stroke="#5f6368" stroke-width="3" /></svg>
          <input v-model="address" class="url" type="text" aria-label="주소" spellcheck="false" />
          <button class="icon" aria-label="축소"><svg width="28" height="28" viewBox="3 3 18 18"><path fill="#5f6368" d="M15.5 14h-.79l-.28-.27C15.41 12.59 16 11.11 16 9.5 16 5.91 13.09 3 9.5 3S3 5.91 3 9.5 5.91 16 9.5 16c1.61 0 3.09-.59 4.23-1.57l.27.28v.79l5 4.99L20.49 19l-4.99-5zm-6 .5c-2.8 0-5-2.2-5-5s2.2-5 5-5 5 2.2 5 5-2.2 5-5 5zM6.7 9h5.6v1H6.7z" /></svg></button>
          <button class="icon" aria-label="북마크"><svg width="30" height="30" viewBox="2 2 20 20"><path fill="#5f6368" d="M22 9.24l-7.19-.62L12 2 9.19 8.63 2 9.24l5.46 4.73L5.82 21 12 17.27 18.18 21l-1.63-7.03L22 9.24zM12 15.4l-3.76 2.27 1-4.28-3.32-2.88 4.38-.38L12 6.1l1.71 4.04 4.38.38-3.32 2.88 1 4.28L12 15.4z" /></svg></button>
        </div>
        <button class="extension" aria-label="확장 프로그램 EX">EX</button>
        <button class="icon puzzle" aria-label="확장 프로그램"><svg width="30" height="30" viewBox="1 1 22 22"><path fill="#5f6368" d="M20.5 11H19V7c0-1.1-.9-2-2-2h-4V3.5C13 2.12 11.88 1 10.5 1S8 2.12 8 3.5V5H4c-1.1 0-1.99.9-1.99 2v3.8H3.5c1.49 0 2.7 1.21 2.7 2.7s-1.21 2.7-2.7 2.7H2V20c0 1.1.9 2 2 2h3.8v-1.5c0-1.49 1.21-2.7 2.7-2.7 1.49 0 2.7 1.21 2.7 2.7V22H17c1.1 0 2-.9 2-2v-4h1.5c1.38 0 2.5-1.12 2.5-2.5S21.88 11 20.5 11z" /></svg></button>
        <button class="avatar">da</button>
        <button class="icon" aria-label="메뉴"><svg width="8" height="28" viewBox="0 0 8 28"><g fill="#5f6368"><circle cx="4" cy="4" r="3" /><circle cx="4" cy="14" r="3" /><circle cx="4" cy="24" r="3" /></g></svg></button>
      </div>

      <main class="page">
        <article class="card">
          <header class="head">
            <div>
              <p class="eyebrow">서울특별시</p>
              <h1>광진구 화양동</h1>
            </div>
            <div class="scores">
              <p class="score">생활 만족도: 상위 104.17%</p>
              <div class="match">
                <span class="score">매칭률:</span>
                <svg v-for="n in 5" :key="n" class="thumb" viewBox="0 0 58 58" aria-hidden="true">
                  <circle cx="25" cy="33" r="25" />
                  <path class="gap" d="M0 43h34M14 14v29" />
                  <path d="M5 16h7v25H2z" />
                  <path d="M16 18h5v22h-5z" />
                  <path class="hand" d="M25 20h5c4-5 8-11 9-17 0-4 5-4 5 3v11h10q4 0 4 4v16q0 4-4 4H33q-4 0-8-4z" />
                </svg>
              </div>
            </div>
          </header>

          <section>
            <div class="section-head">
              <h2>교통 분석</h2>
              <div class="actions">
                <button v-for="a in actions" :key="a" class="action">{{ a }}</button>
              </div>
            </div>

            <div class="map">
              <svg class="map-art" viewBox="0 0 1518 750" role="img" aria-label="서울 지도">
                <defs>
                  <radialGradient id="hill"><stop offset="0" stop-color="#9aa094" stop-opacity=".2" /><stop offset="1" stop-color="#9aa094" stop-opacity="0" /></radialGradient>
                  <clipPath id="seoul"><path :d="seoul" /></clipPath>
                </defs>
                <rect width="1518" height="750" fill="#f4f3ef" />
                <ellipse v-for="(h, i) in hills" :key="'h' + i" :cx="h[0]" :cy="h[1]" :rx="h[2]" :ry="h[3]" fill="url(#hill)" />
                <path class="blocks" :d="blocks" />
                <path class="stream" :d="streams" />
                <path class="brook" :d="brooks" />
                <path class="park" :d="parks" />
                <path class="street-case" :d="outerStreets + localRoads" />
                <path class="street" :d="outerStreets + localRoads" />
                <g clip-path="url(#seoul)">
                  <path class="street-case" :d="cityStreets" />
                  <path class="street" :d="cityStreets" />
                </g>
                <path class="water" :d="water" />
                <path class="border" :d="borders" />
                <path class="highway-case" :d="highways" />
                <path class="highway" :d="highways" />
                <path class="rail" :d="railways" />
                <path class="rail-dash" :d="railways" />
                <path class="motorway-case" :d="motorways" />
                <path class="motorway" :d="motorways" />
                <path class="metro" :d="metro" />
                <path class="rail-dash" :d="metro" />

                <g v-for="(s, i) in placedSigns" :key="'s' + i" :transform="s.transform">
                  <path v-if="s.kind === 'peak'" class="peak-mark" d="M0-7L8 6H-8Z" />
                  <template v-else-if="s.kind === 'ic' || s.kind === 'jc'">
                    <ellipse :class="s.kind" rx="9" ry="7" />
                    <text class="sign-ic">{{ s.kind === 'ic' ? 'IC' : 'JC' }}</text>
                  </template>
                  <template v-else-if="s.kind === 'route'">
                    <ellipse class="route-sign" rx="15" ry="11" />
                    <text class="sign-text">{{ s.text }}</text>
                  </template>
                  <template v-else-if="s.kind === 'shield'">
                    <path class="shield" d="M-13-5H13V6Q13 11 7 11H3L0 14L-3 11H-7Q-13 11-13 6Z" />
                    <path class="shield-top" d="M-14-7L-10-13L-5-10L0-14L5-10L10-13L14-7Z" />
                    <text class="sign-text" y="2">{{ s.text }}</text>
                  </template>
                  <template v-else-if="s.kind === 'local'">
                    <rect class="local-sign" x="-15" y="-8" width="30" height="16" rx="2" />
                    <text class="local-text">{{ s.text }}</text>
                  </template>
                  <template v-else>
                    <circle class="hall" r="8" />
                    <circle r="3" fill="#4d4632" />
                  </template>
                </g>
                <path class="poi-mark" d="M384 378q2 0 2 4v5l8 6v3l-8-2v5l4 3v1l-6-1-6 1v-1l4-3v-5l-8 2v-3l8-6v-5q0-4 2-4z" />
                <path class="poi-mark" d="M42 545v4h6v5h4l-3 8H35l-3-8h4v-5h5v-4z" />
                <path class="poi-mark" d="M1347 130l6 4-2 6 5 3-1 2-6-3-3 5 5 4-1 1 3 0-12-8 6-9-3-2z" />
                <text v-for="(l, i) in placedLabels" :key="'l' + i" :x="l.px" :y="l.py" :class="['label', l.kind]" :transform="l.transform">{{ l.text }}</text>

                <path class="shade" :d="shade" fill-rule="evenodd" />
                <path class="area" :d="hwayang" />
                <path class="route-line" :d="route" />
                <g transform="translate(786 401)">
                  <path fill="#ef625c" d="M0 0C-3-9-16-19-16-31a16 16 0 0 1 32 0C16-19 3-9 0 0z" />
                  <circle cy="-31" r="8" fill="none" stroke="#f3dcc9" stroke-width="3" />
                </g>
                <g transform="translate(952 449)">
                  <path fill="#3558d4" d="M0 0C-3-9-16-19-16-31a16 16 0 0 1 32 0C16-19 3-9 0 0z" />
                  <circle cy="-31" r="8" fill="none" stroke="#ecebe0" stroke-width="3" />
                </g>
                <path d="M15 724v8h86v-8" fill="none" stroke="#000" stroke-width="2" />
                <text class="scale" x="106" y="730">4km</text>
                <text class="brand" x="147" y="729">kakao</text>
              </svg>

              <aside class="result">
                <button class="result-head" :aria-expanded="open" @click="open = !open">
                  <span>자동차 경로 검색 결과</span>
                  <svg width="12" height="20" viewBox="0 0 12 20"><path d="M2 1l8 9-8 9" fill="none" stroke="#fff" stroke-width="3" /></svg>
                </button>
                <ul v-if="open">
                  <li v-for="s in summary" :key="s">{{ s }}</li>
                </ul>
              </aside>
            </div>

            <div class="details">
              <h3>상세 경로</h3>
              <p class="step">남산1호터널</p>
              <h3>출퇴근시간 교통량</h3>
            </div>

            <svg class="chart" viewBox="0 0 1590 409" role="img" aria-label="출퇴근시간 교통량 차트">
              <rect v-for="y in minor" :key="y" x="208" :y="y" width="1178" height="1" fill="#d6dbdd" />
              <g v-for="t in ticks" :key="t.label">
                <rect x="208" :y="t.y" width="1178" height="2" fill="#cccfd0" />
                <text x="188" :y="t.y + 7" text-anchor="end">{{ t.label }}</text>
              </g>
              <g v-for="b in bars" :key="b.label">
                <rect :x="b.x" :y="b.y" width="122" :height="b.height" fill="#f1e086" />
                <template v-if="b.value === 2855">
                  <path :d="`M${b.x - 1} ${plot.bottom}V${b.y - 1}h124V${plot.bottom}`" fill="none" stroke="#8f989d" stroke-opacity=".3" stroke-width="4" />
                  <path :d="`M${b.x - 1} ${plot.bottom}V${b.y - 1}h124V${plot.bottom}`" fill="none" stroke="#8f989d" stroke-opacity=".6" stroke-width="2" />
                  <path :d="`M${b.x + 4} ${plot.bottom}V${b.y + 4}h114V${plot.bottom}`" fill="none" stroke="#f2efd8" stroke-width="2" />
                </template>
                <text :x="b.center" y="309" text-anchor="middle">{{ b.label }}</text>
              </g>
              <path class="tip" d="M1107 87h133v69h-47l-39 20 19-20h-66z" />
              <text class="tip-text" x="1118" y="115" font-weight="700">pm 6-7시</text>
              <text class="tip-text" x="1118" y="141">교통량: <tspan font-weight="700">2,855</tspan></text>
              <rect x="1404" y="94" width="36" height="18" fill="#f1e086" />
              <text class="legend" x="1448" y="109">교통량</text>
            </svg>
          </section>
        </article>
      </main>
    </div>
  </div>
</template>

<style>
body {
  margin: 0;
  background: #fff;
}
</style>

<style scoped>
* {
  box-sizing: border-box;
}
h1, h2, h3, p, ul {
  margin: 0;
  padding: 0;
}
button {
  border: 0;
  padding: 0;
  background: none;
  font-family: inherit;
}
.desktop {
  padding: 76px 112px 146px;
  font-family: 'Open Sans', 'Noto Sans CJK KR', sans-serif;
  color: #32325d;
  overflow: hidden;
}
.window {
  border-radius: 20px;
  background: #fff;
  box-shadow: 0 0 2px rgba(0, 0, 0, 0.5), 0 36px 72px rgba(0, 0, 0, 0.46);
}
.icon {
  display: flex;
}
.tabs {
  display: flex;
  height: 84px;
  padding: 0 30px 0 42px;
  border-radius: 20px 20px 0 0;
  background: #dfe1e5;
  box-shadow: inset 0 2px 0 #eceef0;
}
.lights {
  display: flex;
  gap: 16px;
  align-items: center;
  height: 86px;
}
.light {
  width: 24px;
  height: 24px;
  border-radius: 50%;
}
.red {
  background: #ed6a5e;
  box-shadow: inset 0 0 0 1px #d65a50;
}
.amber {
  background: #f5bf4f;
  box-shadow: inset 0 0 0 1px #d6a243;
}
.green {
  background: #61c554;
  box-shadow: inset 0 0 0 1px #52a842;
}
.tab {
  position: relative;
  display: flex;
  align-items: center;
  width: 480px;
  height: 68px;
  margin: 16px 0 0 40px;
  padding: 0 22px 0 26px;
  border-radius: 16px 16px 0 0;
  background: #fff;
}
.tab::before,
.tab::after {
  content: '';
  position: absolute;
  bottom: 0;
  width: 16px;
  height: 16px;
}
.tab::before {
  left: -16px;
  background: radial-gradient(circle at 0 0, transparent 15px, #fff 16px);
}
.tab::after {
  right: -16px;
  background: radial-gradient(circle at 100% 0, transparent 15px, #fff 16px);
}
.globe {
  width: 28px;
  height: 28px;
  fill: #4d4e55;
}
.tab-title {
  flex: 1;
  margin-left: 18px;
  padding-bottom: 2px;
  font: 23px/32px 'Noto Sans CJK KR', sans-serif;
  color: #3c4043;
}
.new-tab {
  margin: 38px auto 0 32px;
  align-self: flex-start;
}
.tab-menu {
  margin-top: 36px;
  align-self: flex-start;
}
.toolbar {
  display: flex;
  align-items: center;
  gap: 36px;
  height: 74px;
  padding: 0 40px 0 30px;
  border-bottom: 2px solid #dadce0;
}
.address {
  flex: 1;
  display: flex;
  align-items: center;
  height: 56px;
  margin: 0 -8px 0 -6px;
  padding: 0 22px;
  border-radius: 28px;
  background: #f1f3f4;
  gap: 35px;
}
.url {
  flex: 1;
  min-width: 0;
  margin-left: -17px;
  padding: 0;
  border: 0;
  outline: 0;
  font: 29px/36px Roboto, sans-serif;
  background: linear-gradient(90deg, #202124 120px, #5f6368 120px);
  background-clip: text;
  -webkit-background-clip: text;
  -webkit-text-fill-color: transparent;
}
.extension {
  width: 32px;
  height: 32px;
  border-radius: 6px;
  background: linear-gradient(#e8823f, #de6730);
  font: 700 15px/32px 'DejaVu Sans', sans-serif;
  color: #fff;
}
.puzzle {
  margin-left: -3px;
}
.avatar {
  width: 44px;
  height: 44px;
  margin-left: -8px;
  border-radius: 50%;
  background: #b12e5b;
  font: 24px/44px Roboto, sans-serif;
  color: #fff;
}
.page {
  padding: 50px 68px 54px;
}
.card {
  border-radius: 6px;
  background: #e8f0f4;
  box-shadow: 0 0 64px rgba(136, 152, 170, 0.15);
}
.head {
  display: flex;
  justify-content: space-between;
  padding: 28px 28px 32px;
  border-bottom: 2px solid #dde5e8;
}
.eyebrow {
  font-size: 17px;
  line-height: 28px;
  font-weight: 600;
  color: #8898aa;
}
h1 {
  margin-top: 14px;
  font-size: 28px;
  line-height: 36px;
  font-weight: 600;
  color: #000;
}
.scores {
  margin-top: 18px;
}
.score {
  font-size: 25px;
  line-height: 36px;
  font-weight: 600;
  text-align: right;
}
.match {
  display: flex;
  align-items: center;
  justify-content: flex-end;
  gap: 2px;
  margin: 40px 8px 0 0;
}
.match .score {
  padding-top: 4px;
}
.thumb {
  width: 58px;
  height: 58px;
  fill: #4263dc;
}
.hand {
  stroke: #e8f0f4;
  stroke-width: 8px;
  paint-order: stroke;
}
.gap {
  fill: none;
  stroke: #e8f0f4;
  stroke-width: 4px;
}
.section-head {
  display: flex;
  align-items: center;
  justify-content: space-between;
  padding: 54px 28px 0;
}
h2 {
  padding-bottom: 10px;
  font-size: 28px;
  line-height: 36px;
  font-weight: 600;
}
.actions {
  display: flex;
  flex: 0 1 712px;
  flex-wrap: wrap;
  justify-content: flex-end;
  row-gap: 26px;
}
.action {
  height: 46px;
  margin-right: 24px;
  padding: 0 16px;
  border-radius: 8px;
  background: #a5bccd;
  box-shadow: 0 8px 12px rgba(50, 50, 93, 0.11), 0 2px 6px rgba(0, 0, 0, 0.08);
  font-size: 20px;
  line-height: 46px;
  font-weight: 600;
  color: #fff;
}
.action:last-child {
  margin-right: 0;
}
.map {
  position: relative;
  margin: 8px 36px 0;
  border-radius: 16px;
  overflow: hidden;
}
.map-art,
.chart {
  display: block;
  width: 100%;
}
.map-art path {
  stroke-linejoin: round;
}
.blocks {
  fill: #dbe2ea;
}
.water {
  fill: #bccddd;
}
.stream {
  fill: none;
  stroke: #bccddd;
  stroke-width: 6px;
}
.brook {
  fill: none;
  stroke: #bccfe2;
  stroke-width: 1px;
}
.park {
  fill: #c3dfba;
}
.street-case,
.street,
.highway-case,
.highway,
.motorway-case,
.motorway,
.rail,
.rail-dash,
.metro,
.border {
  fill: none;
}
.street-case {
  stroke: #dedbc6;
  stroke-width: 4px;
}
.street {
  stroke: #fdf8d6;
  stroke-width: 3px;
}
.highway-case {
  stroke: #d9bb78;
  stroke-width: 6px;
}
.highway {
  stroke: #fbe099;
  stroke-width: 4px;
}
.motorway-case {
  stroke: #dc9c6c;
  stroke-width: 9px;
  stroke-linecap: round;
}
.motorway {
  stroke: #f8be8b;
  stroke-width: 7px;
  stroke-linecap: round;
}
.rail {
  stroke: #b3b3b3;
  stroke-width: 4px;
}
.metro {
  stroke: #a0a4c8;
  stroke-width: 4px;
}
.rail-dash {
  stroke: #f2f2f5;
  stroke-width: 2px;
  stroke-dasharray: 14 14;
}
.border {
  stroke: #b1b0a8;
  stroke-width: 1px;
  stroke-dasharray: 6 4;
}
.peak-mark {
  fill: #74806f;
}
.poi-mark {
  fill: #6f86a8;
}
.ic,
.jc {
  fill: #fdfcf4;
  stroke: #8b8a80;
  stroke-width: 2px;
}
.jc {
  fill: #f7f28a;
}
.map-art text {
  dominant-baseline: central;
  text-anchor: middle;
  font-family: Roboto, 'Noto Sans CJK KR', sans-serif;
}
.map-art .sign-ic {
  font: 700 8px Roboto, sans-serif;
  fill: #6b6a62;
}
.route-sign,
.shield {
  fill: #889eee;
  stroke: #7488d4;
}
.shield-top {
  fill: #d9645c;
  stroke: #f3e9e4;
}
.map-art .sign-text {
  font: 500 15px Roboto, sans-serif;
  fill: #fff;
}
.local-sign {
  fill: #f7f0c0;
  stroke: #a39d78;
  stroke-width: 2px;
}
.map-art .local-text {
  font: 500 14px Roboto, sans-serif;
  fill: #5b5a50;
}
.hall {
  fill: #f9dc62;
  stroke: #7b7352;
  stroke-width: 2px;
}
.label {
  font-size: 16px;
  stroke: #f7f6f2;
  stroke-width: 3px;
  stroke-opacity: 0.8;
  paint-order: stroke;
}
.city {
  font-size: 22px;
  font-weight: 500;
  fill: #4b4b4b;
}
.capital {
  font-size: 25px;
  font-weight: 500;
  fill: #4b4b4b;
}
.district {
  font-size: 19px;
  fill: #8d8482;
}
.peak {
  font-size: 17px;
  fill: #76826f;
}
.exit {
  fill: #666360;
}
.poi {
  font-size: 18px;
  fill: #6e84a8;
}
.stadium {
  font-size: 17px;
  fill: #66707c;
}
.road {
  font-size: 15px;
  fill: #a05a30;
  stroke: #f8be8b;
}
.shade {
  fill: #878787;
  fill-opacity: 0.42;
}
.area {
  fill: #3f7ac0;
  fill-opacity: 0.8;
}
.route-line {
  fill: none;
  stroke: #4a6df5;
  stroke-width: 5px;
}
.map-art .scale {
  text-anchor: start;
  font: 700 14px Roboto, sans-serif;
}
.map-art .brand {
  text-anchor: start;
  font: 600 17px 'Open Sans', sans-serif;
  fill: #1c1c1c;
}
.result {
  position: absolute;
  top: 22px;
  left: 416px;
  width: 368px;
  padding: 20px 20px 20px 18px;
  border-radius: 12px;
  background: #a5bccd;
  color: #fff;
}
.result-head {
  display: flex;
  align-items: center;
  justify-content: space-between;
  width: 100%;
  height: 40px;
  font-size: 20px;
  font-weight: 700;
  color: #fff;
}
.result ul {
  display: grid;
  gap: 3px;
  margin-top: 8px;
  list-style: none;
}
.result li {
  height: 74px;
  padding: 8px 14px 0;
  background: #7cabce;
  font-size: 19px;
  line-height: 66px;
}
.details {
  padding: 71px 50px 0;
}
h3 {
  font-size: 18px;
  line-height: 28px;
  font-weight: 600;
  color: #8898aa;
}
.step {
  margin: 72px 0 144px;
  font-size: 21px;
  line-height: 32px;
  font-weight: 600;
}
.chart text {
  font: 19px 'Liberation Sans', 'Noto Sans CJK KR', sans-serif;
  fill: #222;
}
.chart .tip-text {
  font-size: 19px;
  fill: #000;
}
.chart .tip-text[font-weight='700'],
.chart .tip-text tspan {
  font-weight: 700;
}
.chart .legend {
  font-size: 17px;
}
.tip {
  fill: #fff;
  stroke: #ccc;
  filter: drop-shadow(2px 2px 2px rgba(0, 0, 0, 0.12));
}
</style>
